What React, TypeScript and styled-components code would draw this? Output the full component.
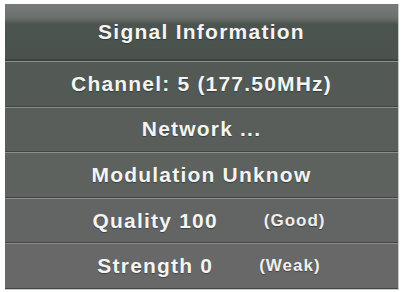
import React from "react";
import styled, { createGlobalStyle } from "styled-components";

const GlobalStyle = createGlobalStyle`
  html, body {
    margin: 0;
    padding: 0;
    background: #ffffff;
  }
  body {
    font-family: "Liberation Sans", Arial, sans-serif;
  }
`;

const Screen = styled.div`
  width: 401px;
  height: 292px;
  padding: 4px 2px 2px 5px;
  box-sizing: border-box;
`;

const Panel = styled.section`
  height: 286px;
  display: flex;
  flex-direction: column;
  border-right: 1px solid #c9cbca;
  border-bottom: 1px solid #c9cbca;
  box-sizing: border-box;
  background: #5a5f5c;
`;

const Header = styled.h1`
  margin: 0;
  height: 56px;
  display: flex;
  align-items: center;
  justify-content: center;
  font-size: 21px;
  font-weight: bold;
  letter-spacing: 1.25px;
  color: #f4f4f4;
  background: linear-gradient(
    to bottom,
    #777b79 0px,
    #6b706d 14px,
    #4c5450 20px,
    #4a524e 56px
  );
  border-bottom: 1px solid #3a3f3c;
  box-shadow: inset 0 -1px 0 #3f4542;
  text-shadow: 0 1px 1px rgba(0, 0, 0, 0.35);
`;

const Row = styled.div<{ $shade: string; $split?: boolean }>`
  flex: 1;
  display: flex;
  align-items: center;
  justify-content: center;
  gap: 46px;
  padding-left: ${(p) => (p.$split ? "15px" : "0")};
  background: ${(p) => p.$shade};
  border-top: 1px solid #8a8e8c;
  border-bottom: 1px solid #414643;
  text-shadow: 0 1px 1px rgba(0, 0, 0, 0.35);
`;

const Label = styled.span`
  font-size: 21px;
  font-weight: bold;
  letter-spacing: 1.2px;
  color: #f4f4f4;
`;

const Note = styled.span`
  font-size: 17px;
  font-weight: bold;
  letter-spacing: 1px;
  color: #f0f0f0;
`;

const rows: { label: string; note?: string; shade: string }[] = [
  { label: "Channel: 5 (177.50MHz)", shade: "#535a56" },
  { label: "Network ...", shade: "#595e5b" },
  { label: "Modulation Unknow", shade: "#5e625f" },
  { label: "Quality 100", note: "(Good)", shade: "#636564" },
  { label: "Strength 0", note: "(Weak)", shade: "#676867" },
];

export default function App() {
  return (
    <>
      <GlobalStyle />
      <Screen>
        <Panel>
          <Header>Signal Information</Header>
          {rows.map((r) => (
            <Row key={r.label} $shade={r.shade} $split={!!r.note}>
              <Label>{r.label}</Label>
              {r.note && <Note>{r.note}</Note>}
            </Row>
          ))}
        </Panel>
      </Screen>
    </>
  );
}
